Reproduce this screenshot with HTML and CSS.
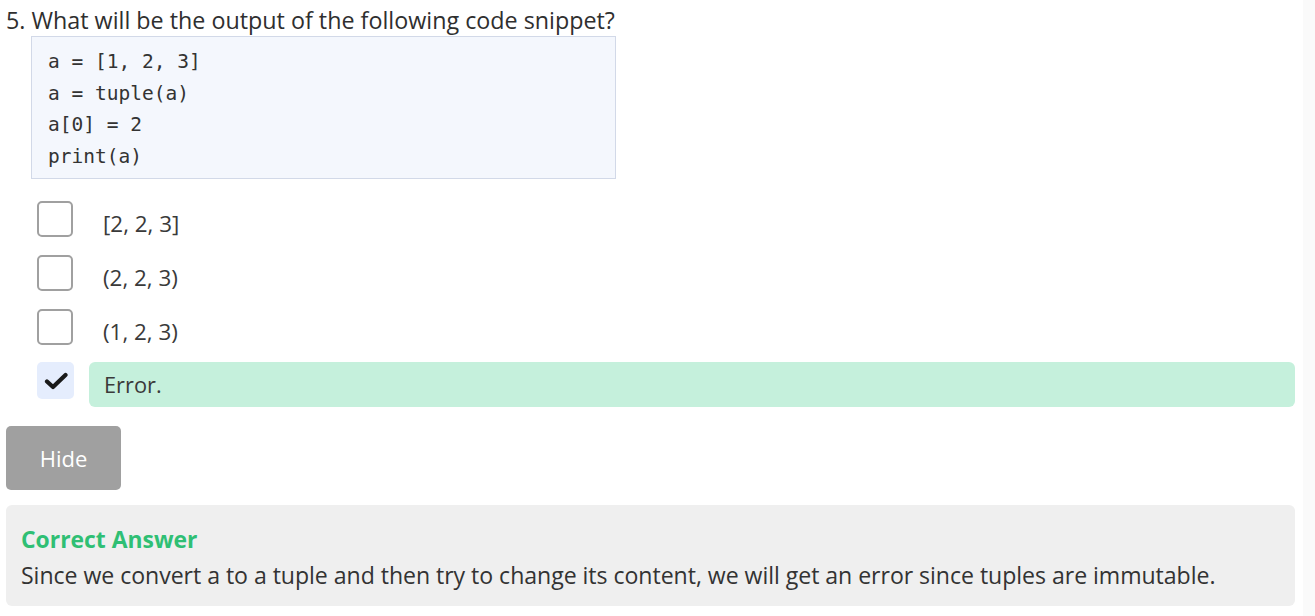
FILE: index.html
```html
<!DOCTYPE html>
<html>
<head>
<meta charset="utf-8">
<link rel="stylesheet" href="styles.css">
</head>
<body>
<div class="quiz">
  <div class="question">5. What will be the output of the following code snippet?</div>
  <pre class="code">a = [1, 2, 3]
a = tuple(a)
a[0] = 2
print(a)</pre>
  <ul class="options">
    <li class="option"><span class="box"></span><span class="label">[2, 2, 3]</span></li>
    <li class="option"><span class="box"></span><span class="label">(2, 2, 3)</span></li>
    <li class="option"><span class="box"></span><span class="label">(1, 2, 3)</span></li>
    <li class="option selected"><span class="box"><svg width="24" height="18" viewBox="0 0 24 18"><path d="M3 9.5 L9 15 L21.5 3" fill="none" stroke="#1a1a1a" stroke-width="4.2" stroke-linecap="round" stroke-linejoin="round"/></svg></span><span class="label">Error.</span></li>
  </ul>
  <button class="hide">Hide</button>
  <div class="answer">
    <div class="answer-title">Correct Answer</div>
    <div class="answer-text">Since we convert a to a tuple and then try to change its content, we will get an error since tuples are immutable.</div>
  </div>
</div>
<div class="scrollbar"></div>
</body>
</html>
```
FILE: styles.css
```css
html, body {
  margin: 0;
  padding: 0;
  background: #ffffff;
}
body {
  font-family: "Open Sans", "Noto Sans", sans-serif;
  color: #333333;
  display: flex;
}
.quiz {
  width: 1289px;
  padding: 0 0 0 6px;
}
.question {
  font-size: 23.3px;
  line-height: 30px;
  padding-top: 5px;
  color: #2f2f2f;
}
.code {
  margin: 1px 0 0 25px;
  width: 551px;
  height: 116px;
  padding: 9px 16px 16px 16px;
  background: #f4f7fd;
  border: 1px solid #d2d9e8;
  font-family: "DejaVu Sans Mono", monospace;
  font-size: 19.5px;
  line-height: 31.5px;
  color: #333;
}
.options {
  list-style: none;
  margin: 21px 0 0 0;
  padding: 0;
  display: flex;
  flex-direction: column;
  gap: 17px;
}
.option {
  display: flex;
  align-items: center;
  height: 37px;
}
.box {
  width: 32px;
  height: 32px;
  margin-left: 31px;
  border: 2.5px solid #a0a0a0;
  border-radius: 5px;
  box-sizing: content-box;
  flex: none;
}
.label {
  margin-left: 30px;
  margin-top: 10px;
  font-size: 22.4px;
  color: #3a3a3a;
}
.option.selected {
  height: 45px;
}
.option.selected .box {
  border: none;
  width: 37px;
  height: 37px;
  background: #e5edfd;
  display: flex;
  align-items: center;
  justify-content: center;
  align-self: flex-start;
}
.option.selected .label {
  margin-left: 15px;
  margin-top: 0;
  flex: 1;
  height: 45px;
  line-height: 45px;
  background: #c5f0dc;
  border-radius: 6px;
  padding-left: 15px;
  font-size: 21.8px;
}
.hide {
  display: block;
  margin-top: 19px;
  width: 115px;
  height: 64px;
  background: #a0a0a0;
  color: #ffffff;
  border: none;
  border-radius: 5px;
  font-family: "Open Sans", "Noto Sans", sans-serif;
  font-size: 22px;
}
.answer {
  margin-top: 15px;
  background: #efefef;
  border-radius: 6px;
  padding: 20px 15px 11px 15px;
}
.answer-title {
  color: #2fbf74;
  font-weight: 700;
  font-size: 22.9px;
  line-height: 30px;
}
.answer-text {
  font-size: 23.1px;
  line-height: 40px;
  color: #333;
  letter-spacing: -0.04px;
}
.scrollbar {
  position: fixed;
  top: 0;
  right: 0;
  width: 12px;
  height: 100%;
  background: #fafafa;
}
```
